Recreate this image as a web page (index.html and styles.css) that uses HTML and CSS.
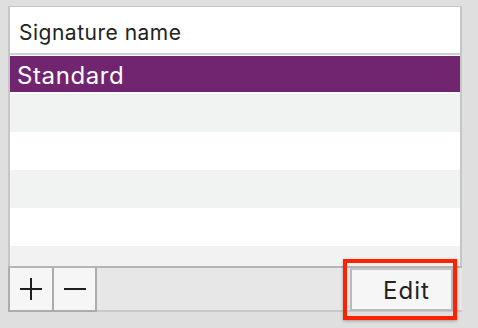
FILE: index.html
```html
<!DOCTYPE html>
<html>
<head>
  <title>Signatures</title>
  <link rel="stylesheet" href="styles.css">
</head>
<body>
  <div class="pane">
    <div class="table">
      <div class="table-header">Signature name</div>
      <div class="rows">
        <div class="row selected">Standard</div>
        <div class="row odd"></div>
        <div class="row"></div>
        <div class="row odd"></div>
        <div class="row"></div>
        <div class="row odd"></div>
      </div>
    </div>
    <div class="toolbar">
      <button class="tool-btn" title="Add">
        <svg width="22" height="22" viewBox="0 0 22 22"><path d="M0 11H22M11 0V22" stroke="#1e1e1e" stroke-width="2"/></svg>
      </button>
      <button class="tool-btn minus" title="Remove">
        <svg width="22" height="22" viewBox="0 0 22 22"><path d="M0 11H22" stroke="#1e1e1e" stroke-width="2"/></svg>
      </button>
      <div class="edit-wrap">
        <button class="edit-btn">Edit</button>
      </div>
    </div>
  </div>
</body>
</html>
```

FILE: styles.css
```css
html, body {
  height: 100%;
}

body {
  margin: 0;
  background-color: #dfdfdf;
  font-family: Inter, "Liberation Sans", sans-serif;
}

.pane {
  width: 454px;
  padding: 6px 0 16px 8px;
}

.table {
  height: 259px;
  overflow: hidden;
  background-color: #fff;
  border: 2px solid #c6c6c6;
  border-top-width: 1px;
  border-bottom: none;
}

.table-header {
  height: 48px;
  box-sizing: border-box;
  padding: 13px 0 0 9px;
  font-size: 21px;
  letter-spacing: 0.5px;
  color: #222;
  border-bottom: 2px solid #cfcfcf;
}

.rows {
  padding-top: 1px;
}

.row {
  height: 38px;
  box-sizing: border-box;
}

.row.odd {
  background-color: #f1f2f2;
}

.row.selected {
  height: 36px;
  margin-bottom: 2px;
  padding: 5px 0 0 7px;
  background-color: #712570;
  color: #fff;
  font-size: 24px;
  letter-spacing: 0.6px;
}

.toolbar {
  display: flex;
  align-items: flex-start;
  height: 46px;
  box-sizing: border-box;
  background-color: #e7e7e7;
  border-top: 2px solid #b5b5b5;
  border-bottom: 2px solid #c9c9c9;
}

.tool-btn {
  width: 46px;
  height: 44px;
  margin: 0 0 -2px 0;
  padding: 0;
  display: flex;
  align-items: center;
  justify-content: center;
  background-color: #f6f6f6;
  border: 2px solid #acacac;
  border-top: none;
}

.tool-btn.minus {
  margin-left: -2px;
  width: 45px;
}

/* red annotation box drawn over the Edit button */
.edit-wrap {
  position: relative;
  margin: 0 9px 0 auto;
  height: 43px;
}

.edit-wrap::after {
  content: "";
  position: absolute;
  top: -9px;
  left: -7px;
  width: 114px;
  height: 61px;
  box-sizing: border-box;
  border: 4px solid #ff2200;
  box-shadow: 0 1px 3px rgba(0, 0, 0, 0.3);
  pointer-events: none;
}

.edit-btn {
  display: block;
  width: 103px;
  height: 43px;
  padding: 2px 0 0 10px;
  font-family: Inter, "Liberation Sans", sans-serif;
  font-size: 24px;
  letter-spacing: 1px;
  color: #222;
  background-color: #f6f6f6;
  border: 2px solid #b9b9b9;
  border-top-color: #c4c4c4;
}
```
